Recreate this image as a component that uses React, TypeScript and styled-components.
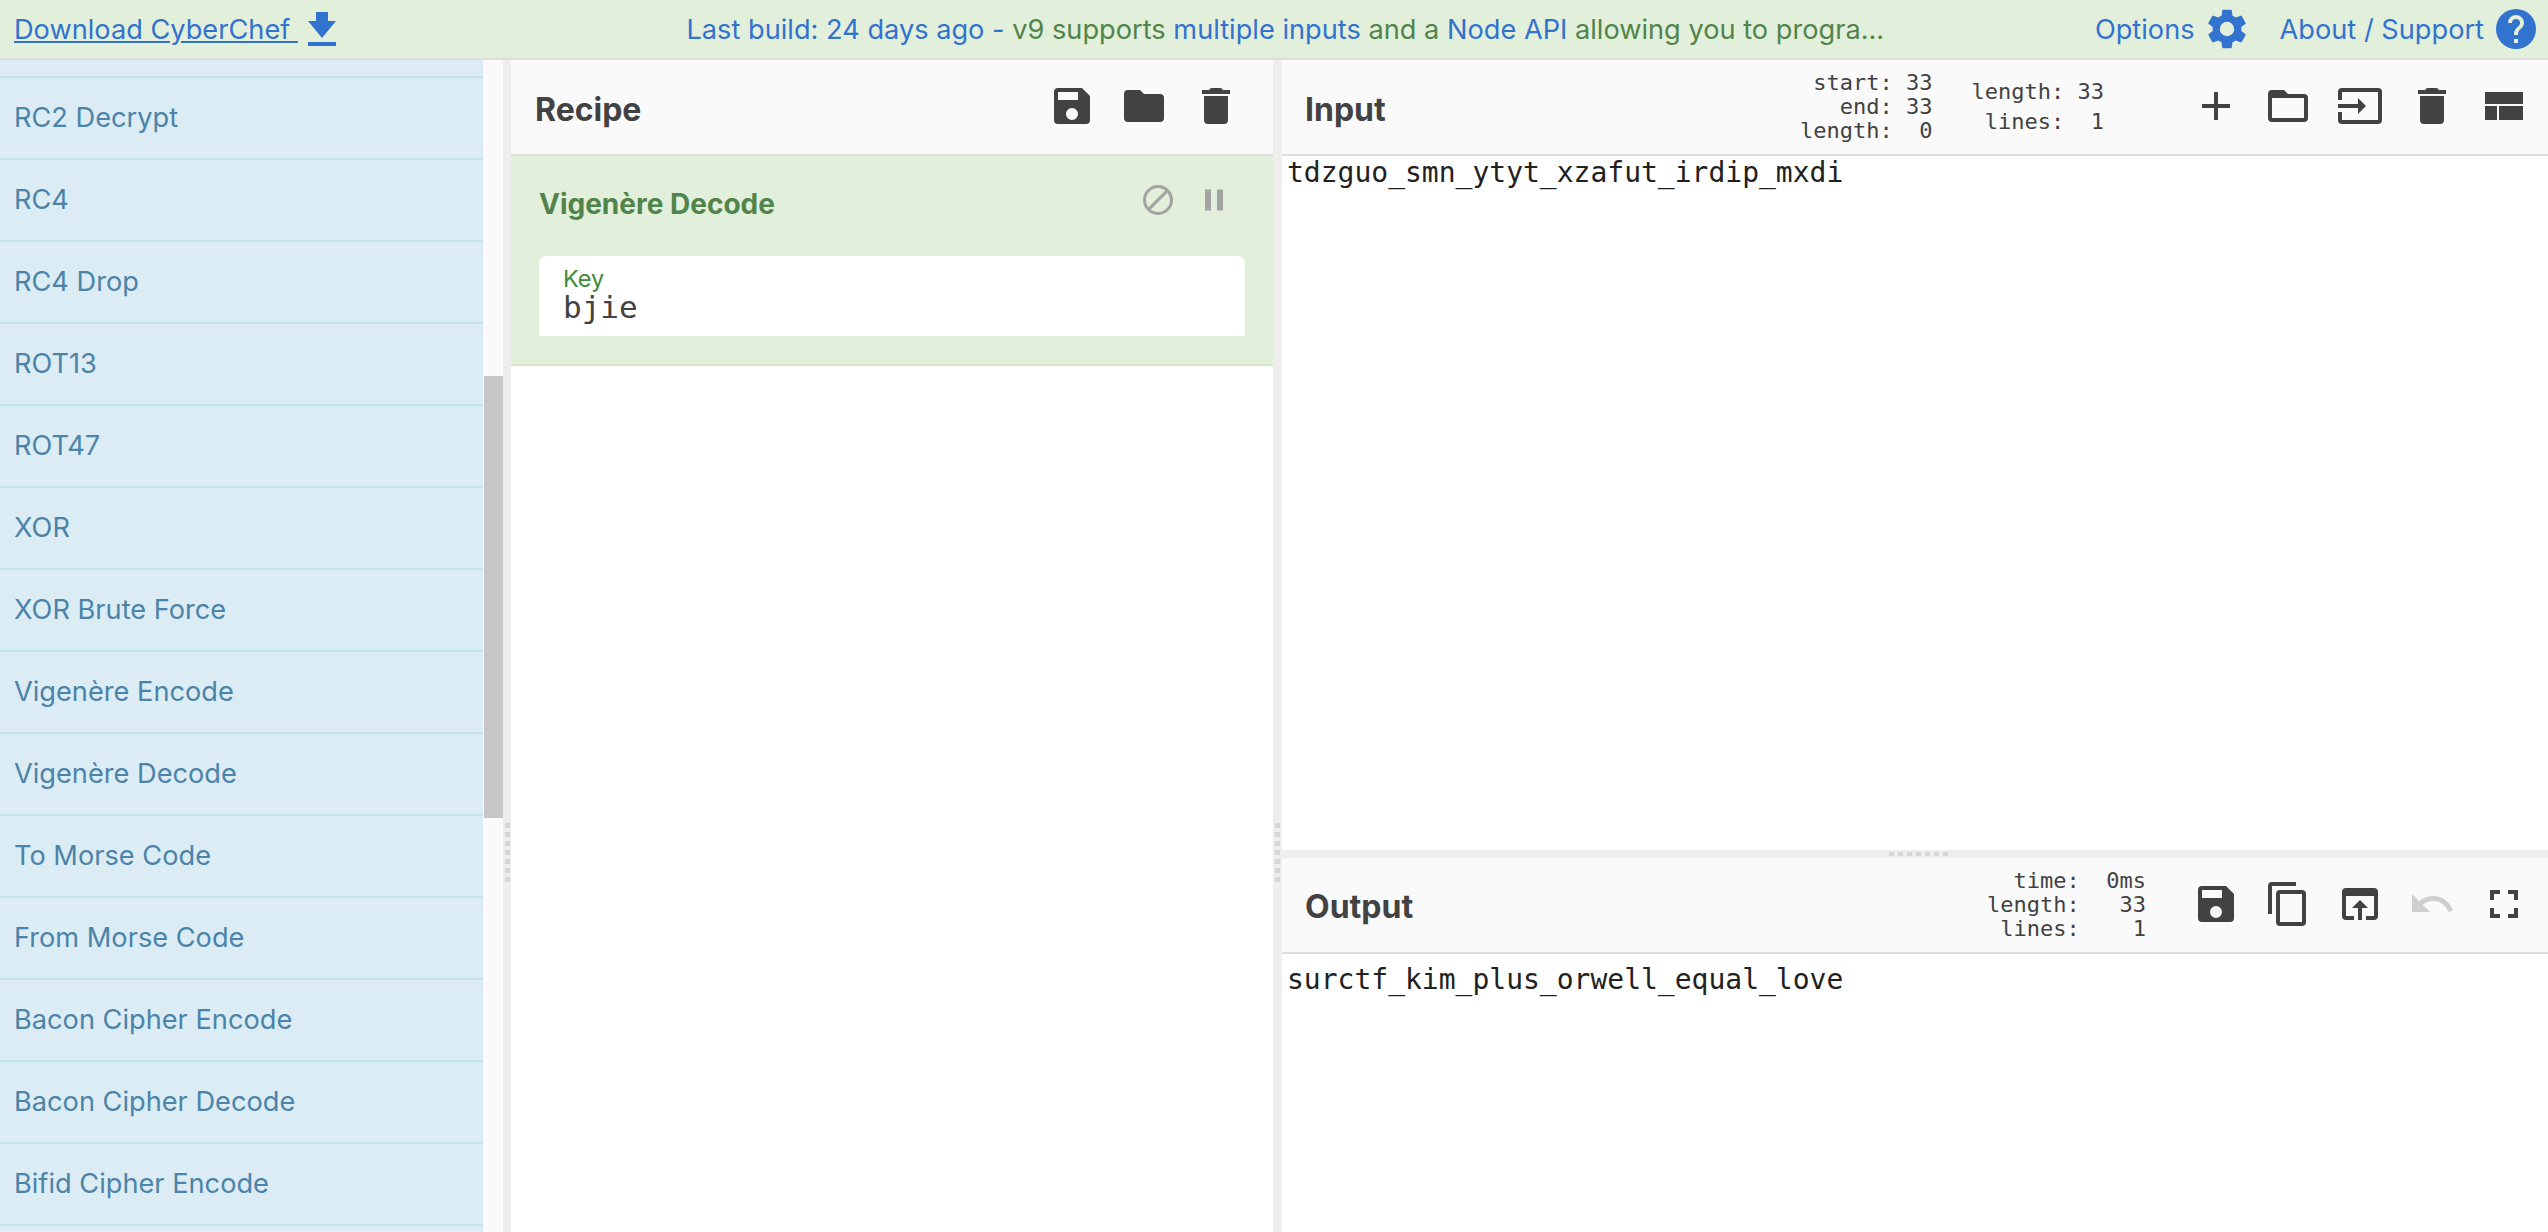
import React from 'react';
import styled, { createGlobalStyle } from 'styled-components';

const Global = createGlobalStyle`
  html, body { margin: 0; padding: 0; height: 100%; overflow: hidden; background: #fff; }
  #root { height: 100%; }
  * { box-sizing: border-box; }
`;

const Page = styled.div`
  width: 2548px; height: 1232px; display: flex; flex-direction: column; overflow: hidden;
  font-family: Inter, "Liberation Sans", sans-serif;
`;
const Banner = styled.header`
  height: 60px; flex: none; display: flex; align-items: center;
  background: #e2efda; border-bottom: 2px solid #ddd; padding: 0 8px 0 14px; font-size: 27.2px; color: #3273cf;
`;
const DownloadLink = styled.span`
  display: inline-flex; align-items: center; gap: 10px; white-space: pre; flex: none;
`;
const Underlined = styled.span` text-decoration: underline; `;
const BannerLink = styled.span`
  display: inline-flex; align-items: center; gap: 8px; white-space: pre;
`;
const Notice = styled.div`
  flex: 1; white-space: pre; color: #51844a; margin-left: 350.5px;
`;
const Blue = styled.span` color: #3273cf; `;
const BannerRight = styled.div` display: flex; align-items: center; gap: 29px; flex: none; `;
const Main = styled.main` flex: 1; display: flex; min-height: 0; `;
const Sidebar = styled.aside` width: 503px; flex: none; display: flex; `;
const OpList = styled.ul`
  width: 483px; margin: 0; padding: 16px 0 0; list-style: none; background: #dbecf5; overflow: hidden;
`;
const OpItem = styled.li`
  height: 82px; border-top: 2px solid #c0e4ef; padding: 0 14px 1px; display: flex; align-items: center;
  color: #4c83a8; font-size: 27.2px;
  &:last-child { height: 84px; border-bottom: 2px solid #c0e4ef; }
`;
const Scrollbar = styled.div` width: 20px; background: #fafafa; padding: 316px 0 0 1px; `;
const Thumb = styled.div` height: 442px; background: #c6c6c6; `;
const Gutter = styled.div<{ $w: number }>`
  width: ${p => p.$w}px; flex: none; background: #eee; display: flex; justify-content: center; padding-top: 763px;
`;
const GripV = styled.div`
  width: 5px; height: 62px;
  background: repeating-linear-gradient(#d6d6d6 0 5px, transparent 5px 9px);
`;
const Recipe = styled.section` width: 762px; flex: none; display: flex; flex-direction: column; `;
const Head = styled.div<{ $pad: number; $left: number }>`
  height: 96px; flex: none; background: #fafafa; border-bottom: 2px solid #ddd;
  display: flex; align-items: center; padding: 0 ${p => p.$pad}px 0 ${p => p.$left}px; color: #424242;
`;
const Title = styled.h2`
  margin: 0; padding-top: 5px; flex: 1; font-size: 32px; font-weight: 700; color: #424242;
`;
const OutputTitle = styled(Title)` padding-top: 3px; `;
const Tools = styled.div<{ $left?: number }>`
  display: flex; align-items: center; gap: 24px; margin: -2px 0 0 ${p => p.$left ?? 0}px;
`;
const Op = styled.div`
  height: 210px; background: #e2efda; border-bottom: 2px solid #d6e7c8; padding: 0 28px;
  display: flex; flex-direction: column; flex: none;
`;
const OpHead = styled.div`
  height: 100px; flex: none; display: flex; align-items: center; justify-content: space-between; padding-right: 13px;
`;
const OpName = styled.div` color: #51844a; font-weight: 700; font-size: 28px; margin-top: -4px; `;
const OpTools = styled.div` display: flex; align-items: center; gap: 20px; margin-top: -12px; `;
const Field = styled.div`
  height: 80px; flex: none; background: #fff; border-radius: 8px 8px 0 0; padding: 11px 24px 0;
`;
const FieldLabel = styled.div` color: #408a3c; font-size: 23.5px; line-height: 24px; `;
const FieldValue = styled.div`
  font-family: "DejaVu Sans Mono", monospace; font-size: 31px; line-height: 33px; color: #424242;
`;
const Right = styled.section` flex: 1; display: flex; flex-direction: column; min-width: 0; `;
const InputPane = styled.div` height: 790px; flex: none; display: flex; flex-direction: column; `;
const OutputPane = styled.div` flex: 1; display: flex; flex-direction: column; `;
const GutterH = styled.div`
  height: 8px; flex: none; background: #eee; display: flex; align-items: center; justify-content: center;
`;
const GripH = styled.div`
  width: 62px; height: 4px; margin-left: 10px;
  background: repeating-linear-gradient(90deg, #d6d6d6 0 5px, transparent 5px 9px);
`;
const Stats = styled.div<{ $lh?: number; $left?: number }>`
  font-family: "DejaVu Sans Mono", monospace; font-size: 22px; line-height: ${p => p.$lh ?? 24}px; color: #424242;
  white-space: pre; text-align: right; margin-left: ${p => p.$left ?? 0}px;
`;
const Text = styled.div<{ $top: number }>`
  padding: ${p => p.$top}px 5px 0; font-family: "DejaVu Sans Mono", monospace; font-size: 28px; line-height: 34px; color: #212121;
  white-space: pre;
`;

const I = styled.svg<{ $s: number; $color?: string }>`
  width: ${p => p.$s}px; height: ${p => p.$s}px; fill: currentColor; flex: none; display: block;
  ${p => (p.$color ? `color: ${p.$color};` : '')}
`;
const Ic = ({ d, s = 48, color }: { d: string; s?: number; color?: string }) => (
  <I $s={s} $color={color} viewBox="0 0 24 24"><path d={d} /></I>
);
const DlIcon = styled.svg` width: 28px; height: 34px; fill: currentColor; flex: none; display: block; `;

const P = {
  save: 'M17 3H5a2 2 0 0 0-2 2v14a2 2 0 0 0 2 2h14a2 2 0 0 0 2-2V7l-4-4zm-5 16a3 3 0 1 1 0-6 3 3 0 0 1 0 6zm3-10H5V5h10v4z',
  folder: 'M10 4H4a2 2 0 0 0-2 2v12a2 2 0 0 0 2 2h16a2 2 0 0 0 2-2V8a2 2 0 0 0-2-2h-8l-2-2z',
  folderO: 'M20 6h-8l-2-2H4a2 2 0 0 0-2 2v12a2 2 0 0 0 2 2h16a2 2 0 0 0 2-2V8a2 2 0 0 0-2-2zm0 12H4V8h16v10z',
  trash: 'M6 19a2 2 0 0 0 2 2h8a2 2 0 0 0 2-2V7H6v12zM19 4h-3.5l-1-1h-5l-1 1H5v2h14V4z',
  plus: 'M19 13h-6v6h-2v-6H5v-2h6V5h2v6h6v2z',
  input: 'M21 3.01H3a2 2 0 0 0-2 2V9h2V4.99h18v14.03H3V15H1v4.01a2 2 0 0 0 2 1.98h18a2 2 0 0 0 2-1.98v-14a2 2 0 0 0-2-2zM11 16l4-4-4-4v3H1v2h10v3z',
  layout: 'M2.5 5h19v6h-19zM2.5 12h6v7h-6zM9.5 12h12v7h-12z',
  copy: 'M16 1H4a2 2 0 0 0-2 2v14h2V3h12V1zm3 4H8a2 2 0 0 0-2 2v14a2 2 0 0 0 2 2h11a2 2 0 0 0 2-2V7a2 2 0 0 0-2-2zm0 16H8V7h11v14z',
  openIn: 'M19 4H5a2 2 0 0 0-2 2v12a2 2 0 0 0 2 2h4v-2H5V8h14v10h-4v2h4a2 2 0 0 0 2-2V6a2 2 0 0 0-2-2zm-7 6l-4 4h3v6h2v-6h3l-4-4z',
  undo: 'M12.5 8c-2.65 0-5.05.99-6.9 2.6L2 7v9h9l-3.62-3.62c1.39-1.16 3.16-1.88 5.12-1.88 3.54 0 6.55 2.31 7.6 5.5l2.37-.78C21.08 11.03 17.15 8 12.5 8z',
  full: 'M7 14H5v5h5v-2H7v-3zm-2-4h2V7h3V5H5v5zm12 7h-3v2h5v-5h-2v3zM14 5v2h3v3h2V5h-5z',
  block: 'M12 2a10 10 0 1 0 0 20 10 10 0 0 0 0-20zM4 12a8 8 0 0 1 8-8c1.85 0 3.55.63 4.9 1.69L5.69 16.9A7.9 7.9 0 0 1 4 12zm8 8c-1.85 0-3.55-.63-4.9-1.69L18.31 7.1A7.9 7.9 0 0 1 20 12a8 8 0 0 1-8 8z',
  pause: 'M6 19h4V5H6v14zm8-14v14h4V5h-4z',
  gear: 'M19.14 12.94c.04-.3.06-.61.06-.94 0-.32-.02-.64-.07-.94l2.03-1.58a.49.49 0 0 0 .12-.61l-1.92-3.32a.49.49 0 0 0-.59-.22l-2.39.96c-.5-.38-1.03-.7-1.62-.94l-.36-2.54a.48.48 0 0 0-.48-.41h-3.84a.48.48 0 0 0-.47.41l-.36 2.54c-.59.24-1.13.57-1.62.94l-2.39-.96a.49.49 0 0 0-.59.22L2.74 8.87a.48.48 0 0 0 .12.61l2.03 1.58c-.05.3-.09.63-.09.94s.02.64.07.94l-2.03 1.58a.49.49 0 0 0-.12.61l1.92 3.32c.12.22.37.29.59.22l2.39-.96c.5.38 1.03.7 1.62.94l.36 2.54c.05.24.24.41.48.41h3.84c.24 0 .44-.17.47-.41l.36-2.54c.59-.24 1.13-.56 1.62-.94l2.39.96c.22.08.47 0 .59-.22l1.92-3.32a.48.48 0 0 0-.12-.61l-2.01-1.58zM12 15.6a3.6 3.6 0 1 1 0-7.2 3.6 3.6 0 0 1 0 7.2z',
  help: 'M12 2a10 10 0 1 0 0 20 10 10 0 0 0 0-20zm1 17h-2v-2h2v2zm2.07-7.75l-.9.92C13.45 12.9 13 13.5 13 15h-2v-.5c0-1.1.45-2.1 1.17-2.83l1.24-1.26c.37-.36.59-.86.59-1.41a2 2 0 1 0-4 0H8a4 4 0 1 1 8 0c0 .88-.36 1.68-.93 2.25z',
};

const ops = ['RC2 Decrypt','RC4','RC4 Drop','ROT13','ROT47','XOR','XOR Brute Force','Vigenère Encode','Vigenère Decode','To Morse Code','From Morse Code','Bacon Cipher Encode','Bacon Cipher Decode','Bifid Cipher Encode'];

export default function App() {
  return (
    <Page>
      <Global />
      <Banner>
        <DownloadLink>
          <Underlined>Download CyberChef </Underlined>
          <DlIcon viewBox="0 0 28 34"><path d="M8 0h12v9h8L14 26 0 9h8zM0 30h28v4H0z" /></DlIcon>
        </DownloadLink>
        <Notice><Blue>Last build: 24 days ago - </Blue>v9 supports <Blue>multiple inputs</Blue> and a <Blue>Node API</Blue> allowing you to progra...</Notice>
        <BannerRight>
          <BannerLink>Options<Ic d={P.gear} /></BannerLink>
          <BannerLink>About / Support<Ic d={P.help} /></BannerLink>
        </BannerRight>
      </Banner>
      <Main>
        <Sidebar>
          <OpList>{ops.map(o => <OpItem key={o}>{o}</OpItem>)}</OpList>
          <Scrollbar><Thumb /></Scrollbar>
        </Sidebar>
        <Gutter $w={8}><GripV /></Gutter>
        <Recipe>
          <Head $pad={33} $left={24}>
            <Title>Recipe</Title>
            <Tools><Ic d={P.save} /><Ic d={P.folder} /><Ic d={P.trash} /></Tools>
          </Head>
          <Op>
            <OpHead>
              <OpName>Vigenère Decode</OpName>
              <OpTools><Ic d={P.block} s={36} color="#a3a3a3" /><Ic d={P.pause} s={36} color="#a3a3a3" /></OpTools>
            </OpHead>
            <Field><FieldLabel>Key</FieldLabel><FieldValue>bjie</FieldValue></Field>
          </Op>
        </Recipe>
        <Gutter $w={9}><GripV /></Gutter>
        <Right>
          <InputPane>
            <Head $pad={20} $left={23}>
              <Title>Input</Title>
              <Stats>{'start: 33\nend: 33\nlength:  0'}</Stats>
              <Stats $lh={30} $left={39}>{'length: 33\nlines:  1'}</Stats>
              <Tools $left={88}>
                <Ic d={P.plus} /><Ic d={P.folderO} /><Ic d={P.input} /><Ic d={P.trash} /><Ic d={P.layout} />
              </Tools>
            </Head>
            <Text $top={0}>tdzguo_smn_ytyt_xzafut_irdip_mxdi</Text>
          </InputPane>
          <GutterH><GripH /></GutterH>
          <OutputPane>
            <Head $pad={20} $left={23}>
              <OutputTitle>Output</OutputTitle>
              <Stats>{'time:  0ms\nlength:   33\nlines:    1'}</Stats>
              <Tools $left={46}>
                <Ic d={P.save} /><Ic d={P.copy} /><Ic d={P.openIn} /><Ic d={P.undo} color="#cfcfcf" /><Ic d={P.full} />
              </Tools>
            </Head>
            <Text $top={9}>surctf_kim_plus_orwell_equal_love</Text>
          </OutputPane>
        </Right>
      </Main>
    </Page>
  );
}
